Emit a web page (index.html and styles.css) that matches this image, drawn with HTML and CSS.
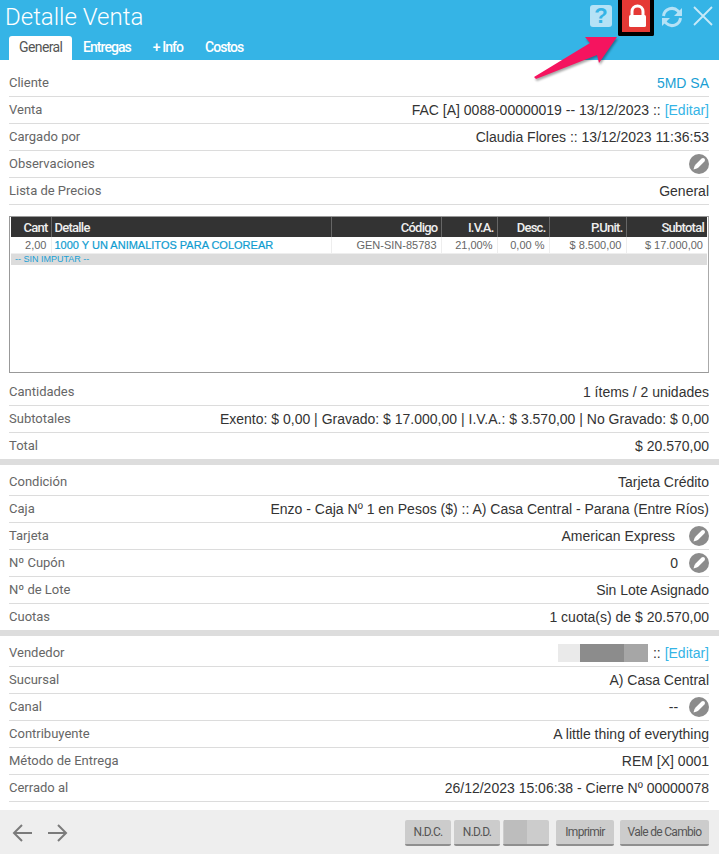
FILE: index.html
```html
<!DOCTYPE html>
<html>
<head lang="es">
    <meta charset="UTF-8">
    <title>Detalle Venta</title>
    <link rel="stylesheet" href="styles.css">
</head>
<body>
<div class="header">
    <div class="top">
        <h1>Detalle Venta</h1>
        <div class="tools">
            <div class="help">?</div>
            <div class="lock">
                <svg width="28" height="32" viewBox="0 0 28 32"><path d="M10 16V11.500a5.500 5.500 0 0 1 11 0V16" fill="none" stroke="#fff" stroke-width="3"/><rect x="7" y="15" width="17" height="12" rx="1.500" fill="#fff"/></svg>
            </div>
            <svg class="icon" width="22" height="24" viewBox="0 0 22 24" fill="none" stroke="#b5e2f6" stroke-width="3"><path d="M2.500 11a8.500 8.500 0 0 1 14.500-5l2 2.500"/><path d="M19.500 13a8.500 8.500 0 0 1-14.500 5l-2-2.500"/><path d="M21 3v8h-8z" fill="#b5e2f6" stroke="none"/><path d="M1 21v-8h8z" fill="#b5e2f6" stroke="none"/></svg>
            <svg class="icon" width="20" height="20" viewBox="0 0 20 20" stroke="#c8e9f8" stroke-width="1.800"><path d="M1 1l18 18M19 1L1 19"/></svg>
        </div>
    </div>
    <ul class="tabs">
        <li class="on">General</li>
        <li>Entregas</li>
        <li>+ Info</li>
        <li>Costos</li>
    </ul>
</div>
<svg class="arrow" width="92" height="54" viewBox="0 0 92 54"><path d="M87 7L69 33L67 25L6 49L4 47L60 13L55 7z" fill="#f5145f"/></svg>

<div class="content">
    <div class="row"><span>Cliente</span><a class="client">5MD SA</a></div>
    <div class="row"><span>Venta</span><b>FAC [A] 0088-00000019 -- 13/12/2023 :: <a>[Editar]</a></b></div>
    <div class="row"><span>Cargado por</span><b>Claudia Flores :: 13/12/2023 11:36:53</b></div>
    <div class="row"><span>Observaciones</span><b><i class="pen"><svg width="20" height="20" viewBox="0 0 20 20"><path d="M8 12l6-6" stroke="#fff" stroke-width="4" stroke-linecap="round"/><path d="M4.500 15.500l1.200-4 2.800 2.800z" fill="#fff"/></svg></i></b></div>
    <div class="row"><span>Lista de Precios</span><b>General</b></div>

    <div class="grid">
        <table>
            <tr>
                <th class="c1">Cant</th><th class="c2">Detalle</th><th class="c3">Código</th><th class="c4">I.V.A.</th><th class="c5">Desc.</th><th class="c6">P.Unit.</th><th class="c7">Subtotal</th>
            </tr>
            <tr>
                <td>2,00</td><td class="name">1000 Y UN ANIMALITOS PARA COLOREAR</td><td>GEN-SIN-85783</td><td>21,00%</td><td>0,00 %</td><td>$ 8.500,00</td><td>$ 17.000,00</td>
            </tr>
            <tr>
                <td class="imputar" colspan="7">-- SIN IMPUTAR --</td>
            </tr>
        </table>
    </div>

    <div class="row"><span>Cantidades</span><b>1 ítems / 2 unidades</b></div>
    <div class="row"><span>Subtotales</span><b>Exento: $ 0,00 | Gravado: $ 17.000,00 | I.V.A.: $ 3.570,00 | No Gravado: $ 0,00</b></div>
    <div class="row last"><span>Total</span><b>$ 20.570,00</b></div>
</div>
<div class="sep"></div>
<div class="content">
    <div class="row"><span>Condición</span><b>Tarjeta Crédito</b></div>
    <div class="row"><span>Caja</span><b>Enzo - Caja Nº 1 en Pesos ($) :: A) Casa Central - Parana (Entre Ríos)</b></div>
    <div class="row"><span>Tarjeta</span><b>American Express <i class="pen"><svg width="20" height="20" viewBox="0 0 20 20"><path d="M8 12l6-6" stroke="#fff" stroke-width="4" stroke-linecap="round"/><path d="M4.500 15.500l1.200-4 2.800 2.800z" fill="#fff"/></svg></i></b></div>
    <div class="row"><span>Nº Cupón</span><b>0 <i class="pen near"><svg width="20" height="20" viewBox="0 0 20 20"><path d="M8 12l6-6" stroke="#fff" stroke-width="4" stroke-linecap="round"/><path d="M4.500 15.500l1.200-4 2.800 2.800z" fill="#fff"/></svg></i></b></div>
    <div class="row"><span>Nº de Lote</span><b>Sin Lote Asignado</b></div>
    <div class="row last"><span>Cuotas</span><b>1 cuota(s) de $ 20.570,00</b></div>
</div>
<div class="sep"></div>
<div class="content">
    <div class="row"><span>Vendedor</span><b class="seller"><u class="blur"><s></s><s></s><s></s><s></s></u> :: <a>[Editar]</a></b></div>
    <div class="row"><span>Sucursal</span><b>A) Casa Central</b></div>
    <div class="row"><span>Canal</span><b>-- <i class="pen near"><svg width="20" height="20" viewBox="0 0 20 20"><path d="M8 12l6-6" stroke="#fff" stroke-width="4" stroke-linecap="round"/><path d="M4.500 15.500l1.200-4 2.800 2.800z" fill="#fff"/></svg></i></b></div>
    <div class="row"><span>Contribuyente</span><b>A little thing of everything</b></div>
    <div class="row"><span>Método de Entrega</span><b>REM [X] 0001</b></div>
    <div class="row"><span>Cerrado al</span><b>26/12/2023 15:06:38 - Cierre Nº 00000078</b></div>
</div>

<div class="footer">
    <div class="nav">
        <svg width="22" height="20" viewBox="0 0 22 20" fill="none" stroke="#7b7b7b" stroke-width="2"><path d="M21 10H3M11 2l-8 8 8 8"/></svg>
        <svg width="22" height="20" viewBox="0 0 22 20" fill="none" stroke="#7b7b7b" stroke-width="2"><path d="M1 10h18M11 2l8 8-8 8"/></svg>
    </div>
    <div class="btns">
        <div class="btn b1">N.D.C.</div>
        <div class="btn b2">N.D.D.</div>
        <div class="btn b3"><s></s></div>
        <div class="btn b4">Imprimir</div>
        <div class="btn b5">Vale de Cambio</div>
    </div>
</div>
</body>
</html>
```

FILE: styles.css
```css
*{
    margin: 0;
    padding: 0;
    box-sizing: border-box;
}
html, body{
    height: 854px;
    overflow: hidden;
}
body{
    font-family: Roboto, "Liberation Sans", sans-serif;
    background-color: #fff;
    position: relative;
}
.header{
    height: 60px;
    background-color: #35b4e6;
}
.top{
    height: 36px;
    display: flex;
    justify-content: space-between;
}
h1{
    font-size: 24px;
    font-weight: 300;
    color: #fff;
    padding: 3px 0 0 5px;
    line-height: 29px;
}
.tools{
    display: flex;
    align-items: flex-start;
    padding-right: 6px;
}
.help{
    width: 22px;
    height: 22px;
    margin: 5px 6px 0 0;
    border-radius: 3px;
    background-color: #b5e2f6;
    color: #35b4e6;
    font-family: "Liberation Sans", sans-serif;
    font-size: 22px;
    font-weight: bold;
    line-height: 22px;
    text-align: center;
}
.lock{
    width: 36px;
    height: 36px;
    background-color: #e53935;
    border: solid #000;
    border-width: 0 4px 4px;
    border-radius: 0 0 2px 2px;
}
.lock svg{
    display: block;
}
.icon{
    margin: 5px 0 0 7px;
}
.icon + .icon{
    margin: 6px 0 0 10px;
}
.tabs{
    list-style: none;
    display: flex;
    padding-left: 9px;
}
.tabs li{
    height: 24px;
    line-height: 23px;
    padding: 0 11px;
    font-size: 14px;
    font-weight: 500;
    letter-spacing: -0.95px;
    color: #fff;
    border-radius: 3px 3px 0 0;
}
.tabs li.on{
    width: 63px;
    padding: 0 10px;
    background-color: #fff;
    color: #555;
    font-weight: 400;
    letter-spacing: -0.6px;
}
.arrow{
    position: absolute;
    left: 530px;
    top: 30px;
    filter: drop-shadow(1px 2px 1px rgba(0, 0, 0, 0.35));
}
.content{
    padding: 10px 10px 0 9px;
}
.content + .sep + .content{
    padding-top: 4px;
}
.row{
    height: 27px;
    padding-bottom: 1px;
    display: flex;
    justify-content: space-between;
    align-items: center;
    border-bottom: 1px solid #dcdcdc;
    font-size: 13px;
    color: #666;
}
.row.last{
    height: 26px;
    border-bottom: 0;
}
.row b{
    font-family: "Liberation Sans", sans-serif;
    font-weight: 400;
    font-size: 14px;
    color: #333;
    display: flex;
    align-items: center;
    white-space: pre;
}
a{
    color: #35b4e6;
}
.client{
    font-family: "Liberation Sans", sans-serif;
    font-size: 14px;
    color: #1a9fd4;
}
.pen{
    width: 20px;
    height: 20px;
    margin-left: 10px;
    border-radius: 50%;
    background-color: #8c8c8c;
    display: block;
}
.pen.near{
    margin-left: 7px;
}
.pen svg{
    display: block;
}
.grid{
    height: 157px;
    margin: 11px 0 6px;
    border: 1px solid #999;
    border-right-color: #aaa;
    padding: 0 1px;
}
table{
    width: 100%;
    border-collapse: collapse;
    table-layout: fixed;
}
th{
    height: 20px;
    background-color: #333;
    color: #eee;
    font-size: 13px;
    font-weight: 500;
    letter-spacing: -0.75px;
    text-align: right;
    padding: 0 3px;
    border-left: 1px solid #666;
}
th:first-child{
    border-left: 0;
}
.c1{ width: 40px; }
.c2{ width: 280px; text-align: left; }
.c3{ width: 110px; }
.c4{ width: 56px; }
.c5{ width: 52px; }
.c6{ width: 77px; }
td{
    height: 16px;
    font-family: "Liberation Sans", sans-serif;
    font-size: 11px;
    color: #666;
    text-align: right;
    padding: 0 4px 0 3px;
    border-left: 1px solid #eee;
    border-bottom: 1px solid #eee;
}
td:first-child{
    border-left: 0;
}
td.name{
    text-align: left;
    color: #0e9cd0;
    -webkit-text-stroke: 0.2px #0e9cd0;
}
td.imputar{
    height: 12px;
    padding: 0 4px;
    background-color: #dcdcdc;
    border-bottom: 0;
    font-size: 9px;
    line-height: 10px;
    color: #1a9fd4;
    text-align: left;
}
.sep{
    height: 6px;
    background-color: #ddd;
}
.blur{
    display: flex;
    width: 90px;
    height: 18px;
    margin-right: 1px;
}
.blur s{
    flex: 1;
    background-color: #8c8c8c;
}
.blur s:first-child{
    background-color: #eaeaea;
    flex: 0 0 22px;
}
.blur s:last-child{
    background-color: #a6a6a6;
    flex: 0 0 24px;
}
.footer{
    position: absolute;
    left: 0;
    right: 0;
    bottom: 0;
    height: 44px;
    background-color: #eee;
    display: flex;
    justify-content: space-between;
    align-items: center;
    padding: 2px 10px 0 11px;
}
.nav{
    display: flex;
    gap: 14px;
}
.btns{
    display: flex;
    gap: 3px;
}
.btn{
    height: 26px;
    line-height: 25px;
    font-size: 12px;
    color: #555;
    text-align: center;
    background-color: #ccc;
    border-bottom: 2px solid #8f8f8f;
    border-radius: 2px;
    letter-spacing: -0.7px;
}
.b1{ width: 46px; }
.b2{ width: 46px; }
.b3{ width: 46px; margin-right: 4px; padding-left: 1px; display: flex; }
.b3 s{ width: 23px; background-color: #bdbdbd; }
.b4{ width: 58px; margin-right: 3px; }
.b5{ width: 89px; }
```
